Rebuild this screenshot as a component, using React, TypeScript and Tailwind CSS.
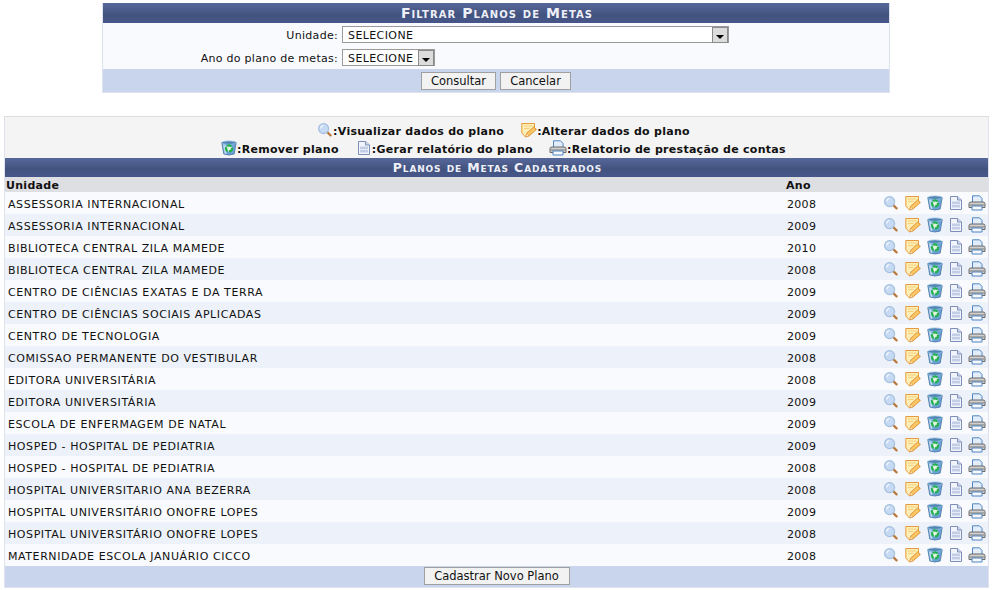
import React from "react";

const rows: [string, string][] = [
  ["ASSESSORIA INTERNACIONAL", "2008"],
  ["ASSESSORIA INTERNACIONAL", "2009"],
  ["BIBLIOTECA CENTRAL ZILA MAMEDE", "2010"],
  ["BIBLIOTECA CENTRAL ZILA MAMEDE", "2008"],
  ["CENTRO DE CIÊNCIAS EXATAS E DA TERRA", "2009"],
  ["CENTRO DE CIÊNCIAS SOCIAIS APLICADAS", "2009"],
  ["CENTRO DE TECNOLOGIA", "2009"],
  ["COMISSAO PERMANENTE DO VESTIBULAR", "2008"],
  ["EDITORA UNIVERSITÁRIA", "2008"],
  ["EDITORA UNIVERSITÁRIA", "2009"],
  ["ESCOLA DE ENFERMAGEM DE NATAL", "2009"],
  ["HOSPED - HOSPITAL DE PEDIATRIA", "2009"],
  ["HOSPED - HOSPITAL DE PEDIATRIA", "2008"],
  ["HOSPITAL UNIVERSITARIO ANA BEZERRA", "2008"],
  ["HOSPITAL UNIVERSITÁRIO ONOFRE LOPES", "2009"],
  ["HOSPITAL UNIVERSITÁRIO ONOFRE LOPES", "2008"],
  ["MATERNIDADE ESCOLA JANUÁRIO CICCO", "2008"],
];

const Lens = () => (
  <svg width="16" height="16" viewBox="0 0 16 16" className="block shrink-0">
    <path d="M9.8 9.8 L13.6 13.4" stroke="#b9773a" strokeWidth="2.2" strokeLinecap="round" />
    <circle cx="6.6" cy="6.6" r="5" fill="#c6daf3" stroke="#a5bfe0" strokeWidth="1.2" />
    <path d="M3.7 6.4 A3 3 0 0 1 6.4 3.7" stroke="#f2f7fd" strokeWidth="1.3" fill="none" />
  </svg>
);
const Note = () => (
  <svg width="16" height="16" viewBox="0 0 16 16" className="block shrink-0">
    <path d="M0.8 1.5 H13.5 V7.5 L8.5 13 L4.5 15 L0.8 11 Z" fill="#fdeeb6" stroke="#e79a3e" strokeWidth="1" strokeLinejoin="round" />
    <path d="M3 4 H11.5 M3 6.5 H8.5" stroke="#f7cf7c" strokeWidth="1.1" />
    <path d="M5 14.8 L5.6 11.4 L12.6 5 L15.4 7.4 L8.2 13.8 Z" fill="#fbc764" stroke="#d98c30" strokeWidth="0.9" strokeLinejoin="round" />
    <path d="M5 14.8 L5.6 11.4 L8.2 13.8 Z" fill="#fff1d2" stroke="#d98c30" strokeWidth="0.5" />
  </svg>
);
const Bin = () => (
  <svg width="16" height="16" viewBox="0 0 16 16" className="block shrink-0">
    <path d="M0.8 2.6 L2.8 14 Q8 16 13.2 14 L15.2 2.6 Z" fill="#6ca3d6" stroke="#44739f" strokeWidth="0.8" />
    <path d="M1.9 4.5 L3.6 13.6 L5.5 14.3 L4.6 4.5 Z" fill="#bcdaf1" />
    <ellipse cx="8" cy="2.6" rx="7.2" ry="1.7" fill="#4f84b3" stroke="#9ec6e6" strokeWidth="0.7" />
    <circle cx="8" cy="8.4" r="3" fill="#dff3df" stroke="#22b14c" strokeWidth="2.2" strokeDasharray="4.6 1.3" />
  </svg>
);
const Doc = () => (
  <svg width="16" height="16" viewBox="0 0 16 16" className="block shrink-0">
    <path d="M2.5 1.5 H9.5 L13.5 5 V14.5 H2.5 Z" fill="#f1f4fb" stroke="#7d8fb8" strokeWidth="1" />
    <path d="M9.5 1.5 V5 H13.5" fill="#d5deef" stroke="#7d8fb8" strokeWidth="1" />
    <rect x="4" y="6.5" width="8" height="6" fill="#c3cee6" />
    <path d="M4 9.5 H12" stroke="#eef2fa" strokeWidth="0.8" />
  </svg>
);
const Printer = () => (
  <svg width="18" height="16" viewBox="0 0 18 16" className="block shrink-0">
    <path d="M4.5 8 V0.8 H11.5 L14 3.3 V8 Z" fill="#e3edf9" stroke="#4e86c4" strokeWidth="1" />
    <path d="M1 8.5 Q1 7 3 7 H15 Q17 7 17 8.5 V12.5 H1 Z" fill="#cfcfcf" stroke="#6a6a6a" strokeWidth="1" />
    <path d="M1.5 10 H16.5" stroke="#8a8a8a" strokeWidth="1.2" />
    <path d="M4 11 H14 V15 H4 Z" fill="#f6f8fc" stroke="#4e86c4" strokeWidth="1" />
  </svg>
);

const Arrow = () => (
  <span className="flex h-[16px] w-[16px] shrink-0 items-center justify-center border border-[#8a8a8a] bg-[#dcdcdc]">
    <span className="mt-[4px] h-0 w-0 border-x-[4px] border-t-[4px] border-x-transparent border-t-black" />
  </span>
);

const Select = ({ className }: { className: string }) => (
  <div className={`box-border flex h-[17px] items-center justify-between border border-[#9a9a9a] bg-white pl-[5px] ${className}`}>
    <span className="pt-[4px] tracking-[0.4px]">SELECIONE</span>
    <Arrow />
  </div>
);

const Btn = ({ children, className = "" }: { children: React.ReactNode; className?: string }) => (
  <button className={`box-border h-[18px] border border-[#a0a0a0] bg-[#f2f2f2] pt-[2px] text-[11.5px] leading-none text-[#111] ${className}`}>
    {children}
  </button>
);

const Title = ({ children, className = "" }: { children: React.ReactNode; className?: string }) => (
  <div className={`flex items-center justify-center bg-[linear-gradient(#56679a,#43537f_60%,#46568a)] font-bold text-[#eef0f8] [font-variant:small-caps] ${className}`}>
    {children}
  </div>
);

const Legend = ({ icon, label, className = "" }: { icon: React.ReactNode; label: string; className?: string }) => (
  <span className={`flex items-center font-bold tracking-[0.28px] text-[#111] ${className}`}>
    {icon}
    <span className="pt-[5px]">:{label}</span>
  </span>
);

export default function App() {
  return (
    <div className="h-[590px] w-[993px] overflow-hidden bg-white pt-[3px] font-['DejaVu_Sans',Verdana,sans-serif] text-[11px] text-[#111]">
      <section className="ml-[102px] w-[788px] border-x border-b border-[#dfe3ee]">
        <Title className="h-[20px] pl-[2px] pt-[1px] text-[14px] tracking-[1.05px]">Filtrar Planos de Metas</Title>
        <div className="bg-[#f9fafd]">
          <div className="flex h-[23px] items-center">
            <label className="w-[239px] pr-[4px] pt-[4px] text-right tracking-[0.3px]">Unidade:</label>
            <Select className="w-[387px]" />
          </div>
          <div className="flex h-[23px] items-center">
            <label className="w-[239px] pr-[4px] pt-[4px] text-right tracking-[0.28px]">Ano do plano de metas:</label>
            <Select className="w-[93px]" />
          </div>
        </div>
        <div className="flex h-[23px] items-center justify-center gap-[4px] bg-[#c9d5ec]">
          <Btn className="w-[75px]">Consultar</Btn>
          <Btn className="w-[71px]">Cancelar</Btn>
        </div>
      </section>

      <section className="ml-[4px] mt-[23px] w-[985px] border-x border-b border-[#dfe3ee]">
        <div className="h-[42px] border-t border-[#dcdcdc] bg-[#f4f4f4] pl-[14px] pt-[4px]">
          <div className="flex h-[18px] items-center justify-center">
            <Legend icon={<Lens />} label="Visualizar dados do plano" />
            <Legend icon={<Note />} label="Alterar dados do plano" className="ml-[17px]" />
          </div>
          <div className="flex h-[18px] items-center justify-center">
            <Legend icon={<Bin />} label="Remover plano" />
            <Legend icon={<Doc />} label="Gerar relatório do plano" className="ml-[17px]" />
            <Legend icon={<Printer />} label="Relatorio de prestação de contas" className="ml-[16px]" />
          </div>
        </div>
        <Title className="h-[19px] pl-[2px] pt-[1px] text-[12.5px] tracking-[0.85px]">Planos de Metas Cadastrados</Title>
        <div className="flex h-[15px] items-center bg-[#dedfe3] pt-[3px] font-bold tracking-[0.3px]">
          <span className="w-[781px] pl-[1px]">Unidade</span>
          <span>Ano</span>
        </div>
        {rows.map(([name, year], i) => (
          <div key={i} className={`flex h-[22px] items-center ${i % 2 ? "bg-[#edf1f9]" : "bg-[#f9fafd]"}`}>
            <span className="w-[782px] pl-[3px] pt-[4px] tracking-[0.58px]">{name}</span>
            <span className="w-[96px] pt-[4px] tracking-[0.3px]">{year}</span>
            <span className="flex items-center">
              <Lens />
              <span className="ml-[6px]"><Note /></span>
              <span className="ml-[6px]"><Bin /></span>
              <span className="ml-[5px]"><Doc /></span>
              <span className="ml-[4px]"><Printer /></span>
            </span>
          </div>
        ))}
        <div className="flex h-[21px] items-center justify-center bg-[#c9d5ec] pb-[2px]">
          <Btn className="w-[146px]">Cadastrar Novo Plano</Btn>
        </div>
      </section>
    </div>
  );
}
